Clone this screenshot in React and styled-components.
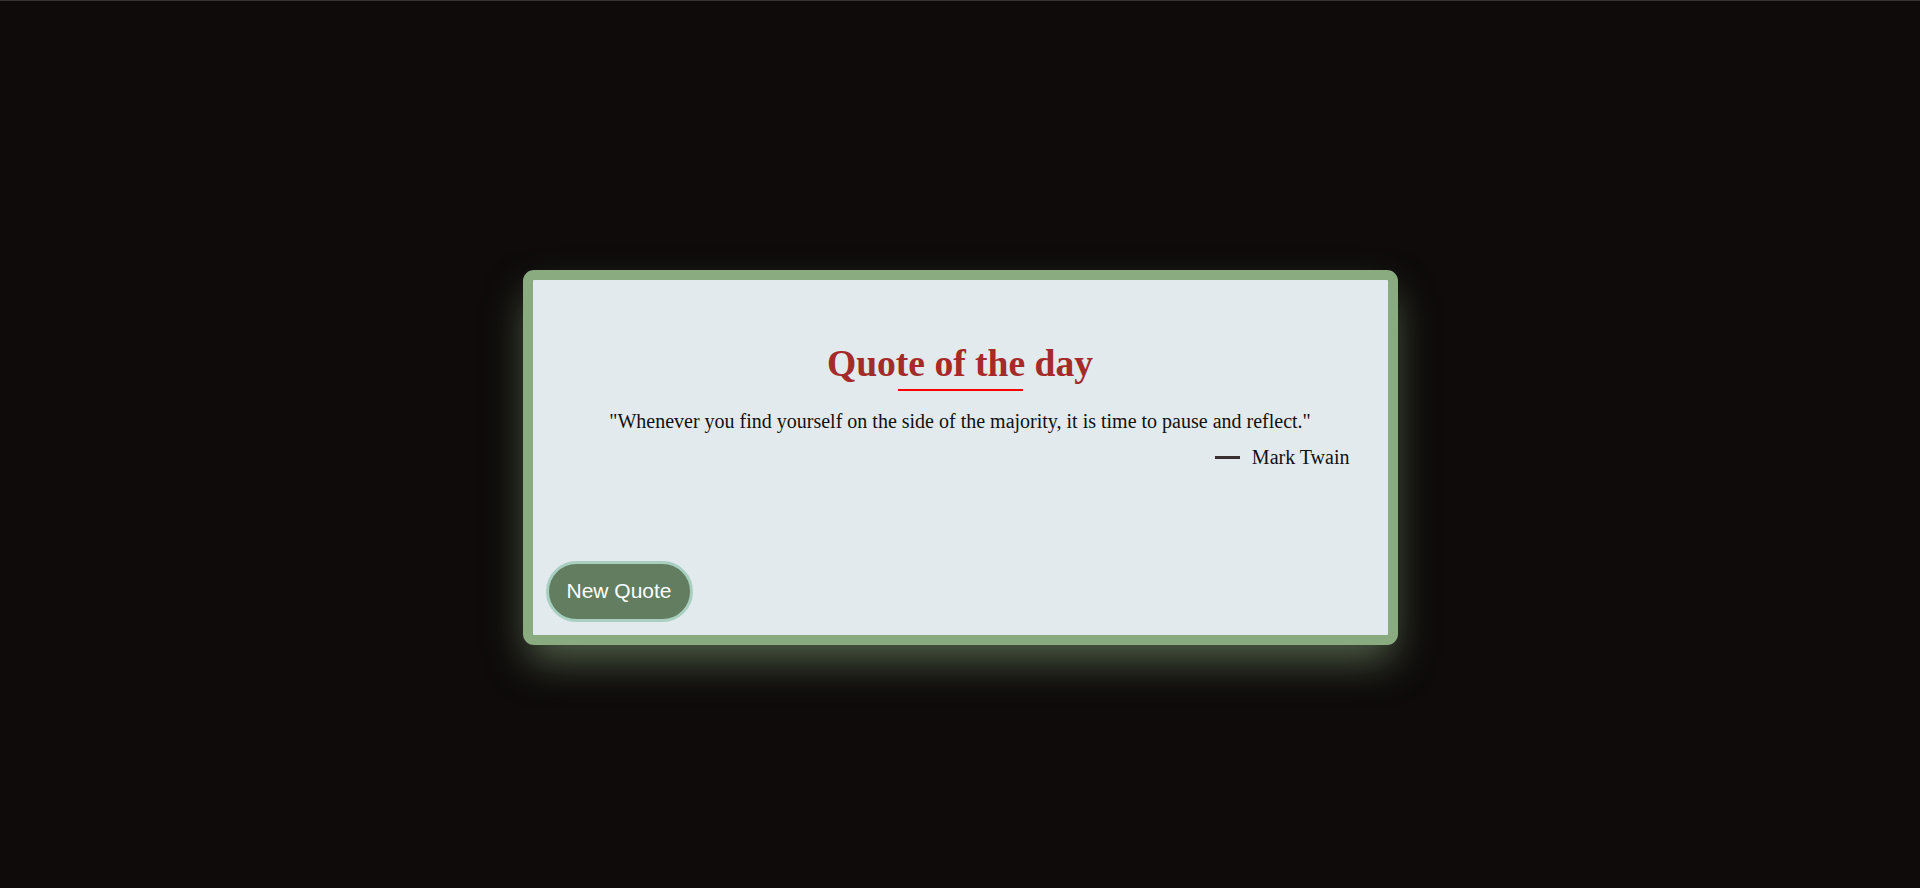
import React from "react";
import styled, { createGlobalStyle } from "styled-components";

const GlobalStyle = createGlobalStyle`
  html, body {
    margin: 0;
    padding: 0;
    background: #0e0b0a;
  }
  body {
    border-top: 1px solid #353433;
    min-height: 887px;
    font-family: "Liberation Serif", "Times New Roman", serif;
  }
`;

const Page = styled.main`
  display: flex;
  justify-content: center;
  padding-top: 269px;
`;

const Card = styled.section`
  box-sizing: border-box;
  width: 875px;
  height: 375px;
  background: #e2eaed;
  border: 10px solid #8aaa80;
  border-radius: 11px;
  box-shadow: 0 20px 40px -5px rgba(138, 170, 128, 0.55);
  display: flex;
  flex-direction: column;
  padding: 62px 0 13px;
`;

const Title = styled.h1`
  margin: 0;
  font-family: "Liberation Serif", "Times New Roman", serif;
  font-weight: 700;
  font-size: 37.6px;
  line-height: 44px;
  color: #a52a2a;
  text-align: center;
  display: flex;
  flex-direction: column;
  align-items: center;

  &::after {
    content: "";
    display: block;
    width: 125px;
    height: 2px;
    margin-top: 3px;
    background: #ff0000;
  }
`;

const QuoteText = styled.p`
  margin: 18px 0 0;
  font-size: 20px;
  line-height: 24px;
  color: #111;
  text-align: center;
`;

const Author = styled.p`
  margin: 12px 0 0;
  padding-right: 38px;
  font-size: 20px;
  line-height: 24px;
  color: #111;
  display: flex;
  justify-content: flex-end;
  align-items: center;
  gap: 12px;

  &::before {
    content: "";
    width: 25px;
    height: 3px;
    background: #3b3030;
  }
`;

const NewQuoteButton = styled.button`
  margin-top: auto;
  margin-left: 13px;
  align-self: flex-start;
  box-sizing: border-box;
  height: 61px;
  padding: 0 18px 2px;
  border: 3px solid #a8cfc0;
  border-radius: 31px;
  background: #627d5f;
  color: #ffffff;
  font-family: "Liberation Sans", Arial, sans-serif;
  font-size: 21px;
  cursor: pointer;
`;

export default function App() {
  return (
    <>
      <GlobalStyle />
      <Page>
        <Card>
          <Title>Quote of the day</Title>
          <QuoteText>
            "Whenever you find yourself on the side of the majority, it is time
            to pause and reflect."
          </QuoteText>
          <Author>Mark Twain</Author>
          <NewQuoteButton>New Quote</NewQuoteButton>
        </Card>
      </Page>
    </>
  );
}
